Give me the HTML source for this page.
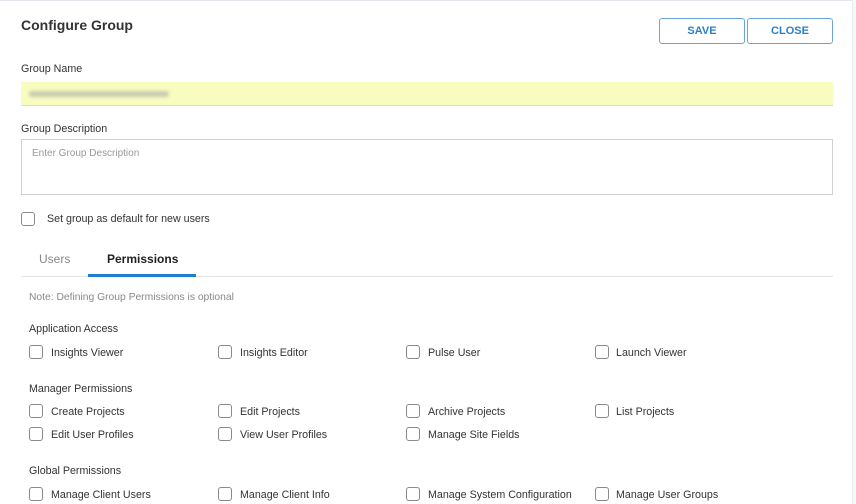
<!DOCTYPE html>
<html><head><style>
body{margin:0;width:856px;height:504px;overflow:hidden;background:#fff;font-family:"Liberation Sans",sans-serif;position:relative}
.a{position:absolute;white-space:nowrap;line-height:1}
.t{font-size:10.7px;color:#333}
.cb{position:absolute;width:12px;height:12px;border:1px solid #8a8a8a;border-radius:3px;background:#fff}
.btn{position:absolute;top:18px;height:24px;border:1px solid #6aa6dc;border-radius:3px;color:#2a7fc9;font-weight:bold;font-size:11px;text-align:center;line-height:25px}
</style></head><body>
<div style="position:absolute;left:0;top:0;width:856px;height:1px;background:#e4e8ee"></div>
<div style="position:absolute;left:852px;top:0;width:4px;height:504px;background:#f7f8fa;border-left:1px solid #e8ebef"></div>
<div class="a" style="left:21px;top:18px;font-size:14px;font-weight:bold;color:#333">Configure Group</div>
<div class="btn" style="left:659px;width:84px">SAVE</div>
<div class="btn" style="left:747px;width:84px">CLOSE</div>
<div class="a t" style="left:21px;top:64px">Group Name</div>
<div style="position:absolute;left:21px;top:82px;width:812px;height:23px;background:#f8fcbf;border-bottom:1px solid #dcdcc8"></div>
<div style="position:absolute;left:29px;top:91px;width:140px;height:6px;background:#c9ccb0;border-radius:3px;filter:blur(1.5px)"></div>
<div class="a t" style="left:21px;top:124px">Group Description</div>
<div style="position:absolute;left:21px;top:139px;width:810px;height:54px;border:1px solid #d0d0d0"></div>
<div class="a" style="left:32px;top:149px;font-size:10px;color:#999">Enter Group Description</div>
<div class="cb" style="left:21px;top:212px"></div>
<div class="a t" style="left:47px;top:214px">Set group as default for new users</div>
<div class="a" style="left:39px;top:253px;font-size:12px;color:#888">Users</div>
<div class="a" style="left:107px;top:253px;font-size:12px;font-weight:bold;color:#222">Permissions</div>
<div style="position:absolute;left:21px;top:276px;width:812px;height:1px;background:#e3e3e3"></div>
<div style="position:absolute;left:88px;top:274px;width:108px;height:3px;background:#1f7fcf"></div>
<div class="a" style="left:29px;top:293px;font-size:10.3px;color:#888">Note: Defining Group Permissions is optional</div>
<div class="a t" style="left:29px;top:324px">Application Access</div>
<div class="a t" style="left:29px;top:384px">Manager Permissions</div>
<div class="a t" style="left:29px;top:466px">Global Permissions</div>

<div class="cb" style="left:29px;top:345px"></div><div class="a t" style="left:51px;top:348px">Insights Viewer</div>
<div class="cb" style="left:218px;top:345px"></div><div class="a t" style="left:240px;top:348px">Insights Editor</div>
<div class="cb" style="left:406px;top:345px"></div><div class="a t" style="left:428px;top:348px">Pulse User</div>
<div class="cb" style="left:595px;top:345px"></div><div class="a t" style="left:616px;top:348px">Launch Viewer</div>

<div class="cb" style="left:29px;top:404px"></div><div class="a t" style="left:51px;top:407px">Create Projects</div>
<div class="cb" style="left:218px;top:404px"></div><div class="a t" style="left:240px;top:407px">Edit Projects</div>
<div class="cb" style="left:406px;top:404px"></div><div class="a t" style="left:428px;top:407px">Archive Projects</div>
<div class="cb" style="left:595px;top:404px"></div><div class="a t" style="left:616px;top:407px">List Projects</div>

<div class="cb" style="left:29px;top:427px"></div><div class="a t" style="left:51px;top:430px">Edit User Profiles</div>
<div class="cb" style="left:218px;top:427px"></div><div class="a t" style="left:240px;top:430px">View User Profiles</div>
<div class="cb" style="left:406px;top:427px"></div><div class="a t" style="left:428px;top:430px">Manage Site Fields</div>

<div class="cb" style="left:29px;top:487px"></div><div class="a t" style="left:51px;top:490px">Manage Client Users</div>
<div class="cb" style="left:218px;top:487px"></div><div class="a t" style="left:240px;top:490px">Manage Client Info</div>
<div class="cb" style="left:406px;top:487px"></div><div class="a t" style="left:428px;top:490px">Manage System Configuration</div>
<div class="cb" style="left:595px;top:487px"></div><div class="a t" style="left:616px;top:490px">Manage User Groups</div>
</body></html>
